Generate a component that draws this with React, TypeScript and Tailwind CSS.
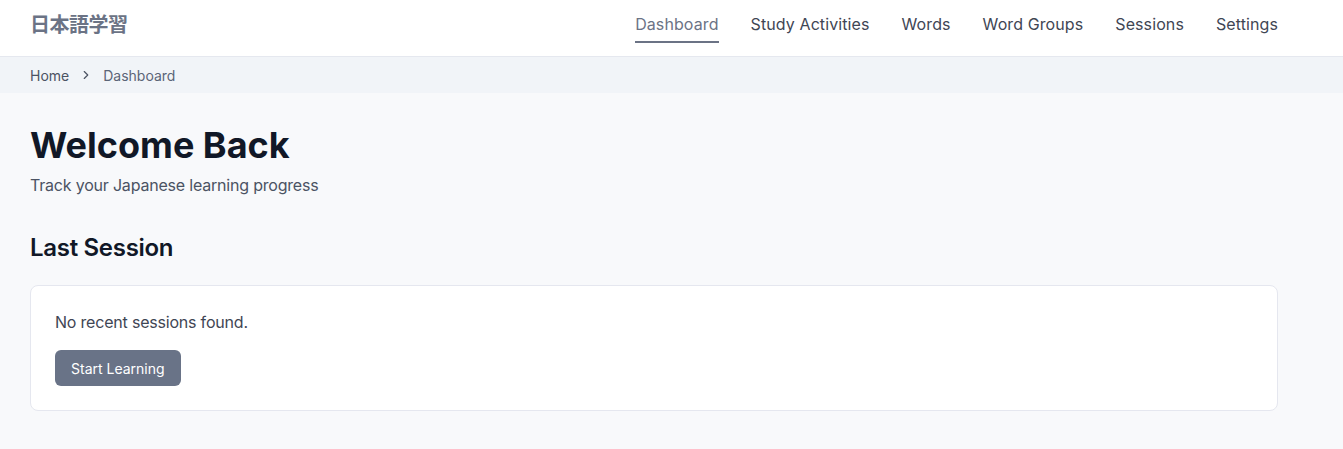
import { ChevronRight } from 'lucide-react';

const navItems = ['Dashboard', 'Study Activities', 'Words', 'Word Groups', 'Sessions', 'Settings'];

export default function App() {
  return (
    <div
      className="min-h-[449px] bg-[#f8f9fb] text-[#1f2937]"
      style={{ fontFamily: 'Inter, "Noto Sans CJK JP", sans-serif' }}
    >
      {/* Header */}
      <header className="h-[57px] bg-white border-b border-[#e5e8ef] px-[30px]">
        <div className="max-w-[1248px] h-full flex items-center justify-between">
          <div className="pb-[6px] text-[20px] font-bold text-[#6b7385] tracking-tight">日本語学習</div>
          <nav className="flex items-center gap-[32px] h-full">
            {navItems.map((item) => (
              <a
                key={item}
                href="#"
                className={
                  item === 'Dashboard'
                    ? 'relative h-full flex items-center pb-[8px] text-[16px] text-[#6b7385] tracking-[0.1px]'
                    : 'relative h-full flex items-center pb-[8px] text-[16px] text-[#3f4654] tracking-[0.1px]'
                }
              >
                {item}
                {item === 'Dashboard' && (
                  <span className="absolute left-0 right-0 top-[41px] h-[2px] bg-[#6b7385]" />
                )}
              </a>
            ))}
          </nav>
        </div>
      </header>

      {/* Breadcrumb */}
      <div className="h-[36px] bg-[#f1f4f8] px-[30px] flex items-center text-[14px] text-[#4b5363]">
        <span>Home</span>
        <ChevronRight className="w-[14px] h-[14px] mx-[10px] text-[#4b5363]" strokeWidth={2} />
        <span className="text-[#5b6477]">Dashboard</span>
      </div>

      {/* Main */}
      <main className="px-[30px] pt-[30px]">
        <div className="max-w-[1248px]">
          <h1 className="text-[36px] leading-[44px] font-bold text-[#111827]">Welcome Back</h1>
          <p className="mt-[7px] text-[16px] leading-[22px] text-[#4b5363] tracking-[-0.2px]">Track your Japanese learning progress</p>

          <h2 className="mt-[36px] text-[24px] leading-[32px] font-semibold text-[#111827] tracking-[-0.3px]">Last Session</h2>

          <div className="mt-[21px] bg-white border border-[#e5e7ef] rounded-lg px-[24px] pt-[25px] pb-[24px]">
            <p className="text-[16px] leading-[22px] text-[#3f4654] tracking-[-0.2px]">No recent sessions found.</p>
            <button className="mt-[17px] h-[36px] px-[16px] rounded-md bg-[#697387] text-white text-[14px]">
              Start Learning
            </button>
          </div>
        </div>
      </main>
    </div>
  );
}
